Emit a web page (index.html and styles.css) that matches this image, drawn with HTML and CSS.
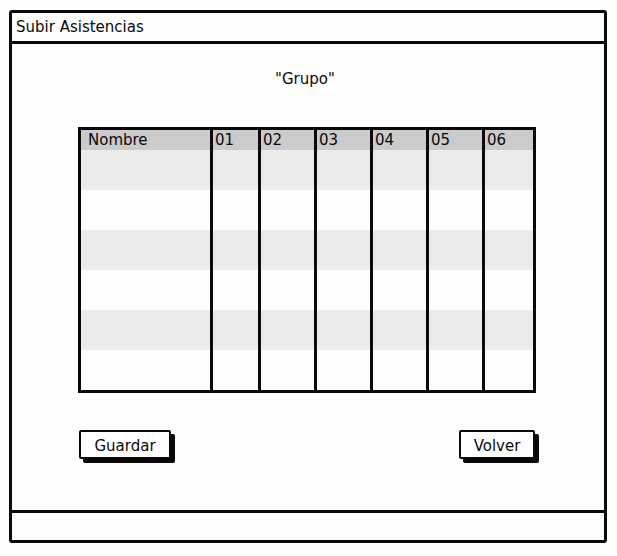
FILE: index.html
```html
<!DOCTYPE html>
<html lang="es">
<head>
  <meta charset="UTF-8" />
  <title>Subir Asistencias</title>
  <link rel="stylesheet" href="styles.css">
</head>
<body>
  <div class="window">
    <div class="titlebar">Subir Asistencias</div>

    <div class="content">
      <div class="group-name">"Grupo"</div>

      <table class="attendance">
        <thead>
          <tr>
            <th class="col-name">Nombre</th>
            <th class="col-day">01</th>
            <th class="col-day">02</th>
            <th class="col-day">03</th>
            <th class="col-day">04</th>
            <th class="col-day">05</th>
            <th class="col-last">06</th>
          </tr>
        </thead>
        <tbody>
          <tr><td></td><td></td><td></td><td></td><td></td><td></td><td></td></tr>
          <tr><td></td><td></td><td></td><td></td><td></td><td></td><td></td></tr>
          <tr><td></td><td></td><td></td><td></td><td></td><td></td><td></td></tr>
          <tr><td></td><td></td><td></td><td></td><td></td><td></td><td></td></tr>
          <tr><td></td><td></td><td></td><td></td><td></td><td></td><td></td></tr>
          <tr><td></td><td></td><td></td><td></td><td></td><td></td><td></td></tr>
        </tbody>
      </table>

      <div class="actions">
        <button class="btn btn-save">Guardar</button>
        <button class="btn btn-back">Volver</button>
      </div>
    </div>

    <div class="footer"></div>
  </div>
</body>
</html>
```

FILE: styles.css
```css
:root {
  --bg: #fdfdfb;
  --ink: #0a0a0a;
  --head: #cbcbcb;
  --stripe: #ebebe9;
}

* {
  margin: 0;
  padding: 0;
  box-sizing: border-box;
}

body {
  background: var(--bg);
  color: var(--ink);
  font-family: "DejaVu Sans", sans-serif;
  font-size: 15px;
}

.window {
  margin: 10px 0 0 9px;
  width: 598px;
  height: 533px;
  border: 3px solid var(--ink);
  border-radius: 3px;
  display: flex;
  flex-direction: column;
}

.titlebar {
  height: 31px;
  border-bottom: 3px solid var(--ink);
  padding: 4px 0 0 4px;
  line-height: 20px;
}

.content {
  flex: 1;
  display: flex;
  flex-direction: column;
}

.group-name {
  text-align: center;
  padding: 25px 6px 0 0;
  line-height: 20px;
}

.attendance {
  margin: 38px 0 0 66px;
  width: 458px;
  border: 3px solid var(--ink);
  border-spacing: 0;
  table-layout: fixed;
}

.attendance th {
  background: var(--head);
  height: 20px;
  font-weight: normal;
  text-align: left;
  line-height: 18px;
  vertical-align: top;
  padding: 1px 0 0 2px;
}

.attendance th,
.attendance td {
  border-right: 3px solid var(--ink);
}

.attendance th:last-child,
.attendance td:last-child {
  border-right: none;
}

.attendance .col-name {
  width: 132px;
  padding-left: 7px;
}

.attendance .col-day {
  width: 48px;
}

.attendance th.col-day ~ th.col-day {
  width: 56px;
}

.attendance td {
  height: 40px;
}

.attendance tbody tr:nth-child(odd) td {
  background: var(--stripe);
}

.actions {
  display: flex;
  justify-content: space-between;
  padding: 0 69px 0 67px;
  margin-top: 37px;
}

.btn {
  font-family: inherit;
  font-size: 15px;
  color: var(--ink);
  background: #fff;
  border: 2px solid var(--ink);
  border-radius: 2px;
  box-shadow: 4px 4px 0 var(--ink);
  height: 29px;
  padding-top: 2px;
}

.btn-save {
  width: 92px;
}

.btn-back {
  width: 76px;
}

.footer {
  height: 30px;
  border-top: 3px solid var(--ink);
}
```
